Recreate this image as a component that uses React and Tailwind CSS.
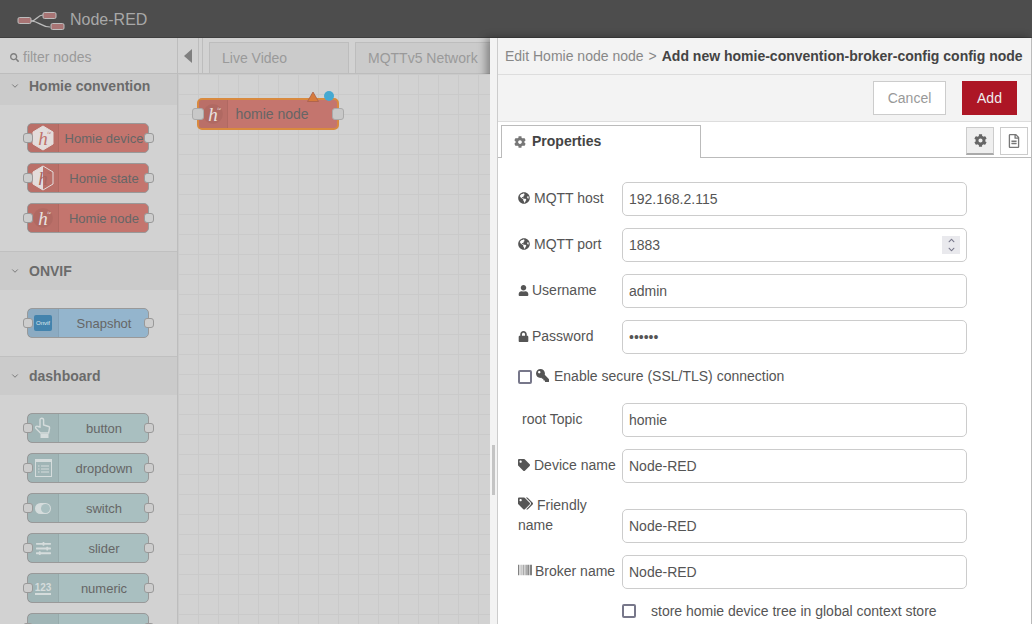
import React from 'react';
import {
  FaSearch, FaCog, FaGlobeAmericas, FaUser, FaLock, FaKey, FaTag, FaTags, FaBarcode,
  FaRegFileAlt, FaChevronUp, FaChevronDown, FaSlidersH,
} from 'react-icons/fa';
import { LuChevronDown } from 'react-icons/lu';

const Logo = () => (
  <svg className="mt-[3px]" width="48" height="24" viewBox="0 0 48 24" fill="none">
    <path d="M14 13 C20 13 20 7 26 7" stroke="#bdbdbd" strokeWidth="1.2" />
    <path d="M14 13 C22 13 24 19 33 19" stroke="#bdbdbd" strokeWidth="1.2" />
    <rect x="1" y="9.5" width="13" height="6" rx="1.5" fill="#a87474" stroke="#bdbdbd" />
    <rect x="26" y="4.5" width="13" height="6" rx="1.5" fill="#a87474" stroke="#bdbdbd" />
    <rect x="34" y="15.5" width="13" height="6" rx="1.5" fill="#a87474" stroke="#bdbdbd" />
  </svg>
);

const Hexagon = ({ solid }) => (
  <svg width="22" height="26" viewBox="0 0 22 26">
    <path
      d="M11 1 L21 7 L21 19 L11 25 L1 19 L1 7 Z"
      fill={solid ? '#e3dcdb' : 'none'}
      stroke="#e3dcdb"
      strokeWidth="1"
    />
    {!solid && <path d="M11 1 L1 7 L1 19 L11 25 Z" fill="#e3dcdb" />}
  </svg>
);

const HIcon = ({ variant }) => (
  <div className="relative flex h-full w-full items-center justify-center">
    {variant === 'device' && <Hexagon solid />}
    {variant === 'state' && <Hexagon />}
    {!variant && <div className="absolute h-[20px] w-[20px] rounded-full bg-black/5" />}
    <span
      className={`absolute font-['Liberation_Serif',serif] text-[19px] italic leading-none ${
        variant === 'device' ? 'text-[#c0726b]' : variant === 'state' ? 'text-[#a8655f]' : 'text-[#e8e2e1]'
      }`}
    >
      h
      <span className="absolute left-[9px] top-[1px] text-[5px] leading-none">ie</span>
    </span>
  </div>
);

const HandIcon = () => (
  <svg width="18" height="22" viewBox="0 0 18 22" fill="none" stroke="#d5dcdc" strokeWidth="1.4">
    <path d="M6 10 V3 a1.8 1.8 0 0 1 3.6 0 V8 l5 1.5 a1.5 1.5 0 0 1 1 1.5 l-1 5 H6.5 L2 11.5 a1.4 1.4 0 0 1 2-2 Z" />
    <rect x="6.5" y="17" width="8" height="4" fill="#d5dcdc" stroke="none" />
  </svg>
);

const DropdownIcon = () => (
  <svg width="17" height="18" viewBox="0 0 17 18" fill="none" stroke="#d5dcdc">
    <rect x="0.5" y="0.5" width="16" height="17" />
    <rect x="0.5" y="0.5" width="16" height="2" fill="#d5dcdc" />
    <path d="M3 7 H4.5 M6 7 H14 M3 10 H4.5 M6 10 H14 M3 13 H4.5 M6 13 H14" />
  </svg>
);

const SwitchIcon = () => (
  <div className="flex h-[11px] w-4 items-center justify-end rounded-full bg-[#d5dcdc] pr-[1px]">
    <div className="h-[9px] w-[9px] rounded-full bg-[#a9bfc0]" />
  </div>
);

const Port = () => <div className="h-[10px] w-[10px] shrink-0 rounded-[3px] border border-[#999] bg-[#cdcdcd]" />;

const PaletteNode = ({ label, color, icon }) => (
  <div className="relative ml-[27px] flex h-[30px] w-[122px] rounded-[5px] border border-[#999] text-[13px] text-[#666]" style={{ backgroundColor: color }}>
    <div className="flex w-[31px] shrink-0 items-center justify-center border-r border-black/5 bg-black/5">{icon}</div>
    <div className="flex flex-1 items-center justify-center whitespace-nowrap pl-[1px] pt-[1px]">{label}</div>
    <div className="absolute left-[-5px] top-[9px]"><Port /></div>
    <div className="absolute right-[-6px] top-[9px]"><Port /></div>
  </div>
);

const Section = ({ title, headerClass, children }) => (
  <div className="border-b border-[#c0c0c0]">
    <div className={`flex items-center bg-[#cbcbcb] pl-[10px] text-[14px] font-bold text-[#6b6b6b] ${headerClass}`}>
      <LuChevronDown className="mr-[9px] text-[#6b6b6b]" size={10} />
      {title}
    </div>
    <div className="flex flex-col gap-[10px] py-[18px]">{children}</div>
  </div>
);

const RED = '#c4756e';
const TEAL = '#a9bfc0';

const Palette = () => (
  <div className="flex w-[178px] shrink-0 flex-col overflow-hidden border-r border-[#bdbdbd] bg-[#d2d2d2]">
    <div className="flex h-[36px] shrink-0 items-center border-b border-[#bdbdbd] pl-[10px] pt-[4px] text-[14px] text-[#9a9a9a]">
      <FaSearch size={9} className="mr-[4px] text-[#7f7f7f]" />
      filter nodes
    </div>
    <Section title="Homie convention" headerClass="h-[31px] pb-[7px]">
      <PaletteNode label="Homie device" color={RED} icon={<HIcon variant="device" />} />
      <PaletteNode label="Homie state" color={RED} icon={<HIcon variant="state" />} />
      <PaletteNode label="Homie node" color={RED} icon={<HIcon />} />
    </Section>
    <Section title="ONVIF" headerClass="h-[38px]">
      <PaletteNode
        label="Snapshot"
        color="#94b5cd"
        icon={
          <div className="flex h-[16px] w-[18px] items-center justify-center rounded-[2px] bg-[#4383ad] text-[6px] text-[#dfe8ee]">
            Onvif
          </div>
        }
      />
    </Section>
    <Section title="dashboard" headerClass="h-[38px]">
      <PaletteNode label="button" color={TEAL} icon={<HandIcon />} />
      <PaletteNode label="dropdown" color={TEAL} icon={<DropdownIcon />} />
      <PaletteNode label="switch" color={TEAL} icon={<SwitchIcon />} />
      <PaletteNode label="slider" color={TEAL} icon={<FaSlidersH size={15} className="text-[#d5dcdc]" />} />
      <PaletteNode
        label="numeric"
        color={TEAL}
        icon={<span className="border-b-2 border-[#d5dcdc] text-[10px] font-bold leading-[11px] text-[#d5dcdc]">123</span>}
      />
      <PaletteNode label="" color={TEAL} icon={null} />
    </Section>
  </div>
);

const Workspace = () => (
  <div className="flex min-w-0 flex-1 flex-col overflow-hidden">
    <div className="flex h-[36px] shrink-0 border-b border-[#bdbdbd] bg-[#d2d2d2] text-[14px] text-[#9a9a9a]">
      <div className="flex w-[21px] shrink-0 items-center justify-center border-r border-[#bdbdbd] pr-[1px]">
        <svg width="8" height="14" viewBox="0 0 8 14"><path d="M8 0 V14 L0 7 Z" fill="#7f7f7f" /></svg>
      </div>
      <div className="ml-[3px] w-[1px] shrink-0 bg-[#bdbdbd]" />
      <div className="ml-[6px] mt-[4px] flex w-[140px] shrink-0 items-center border border-b-0 border-[#bdbdbd] bg-[#cbcbcb] pl-[12px]">Live Video</div>
      <div className="ml-[6px] mt-[4px] flex w-[160px] shrink-0 items-center whitespace-nowrap border border-b-0 border-[#bdbdbd] bg-[#cbcbcb] pl-[12px]">MQTTv5 Network</div>
    </div>
    <div className="relative flex-1 bg-[#d2d2d2] bg-[linear-gradient(#cacaca_1px,transparent_1px),linear-gradient(90deg,#cacaca_1px,transparent_1px)] bg-[size:20px_20px] bg-[position:0_0]">
      <div className="absolute left-[19px] top-[24px] flex h-[32px] w-[142px] rounded-[5px] border-2 border-[#d98a3f] bg-[#c4756e] text-[14px] text-[#666]">
        <div className="flex w-[29px] shrink-0 items-center justify-center border-r border-black/5 bg-black/5"><HIcon /></div>
        <div className="flex flex-1 items-center justify-center pr-[21px]">homie node</div>
        <div className="absolute left-[-7px] top-[8px] h-3 w-3 rounded-[3px] border border-[#aaa] bg-[#c8c8c8]" />
        <div className="absolute right-[-7px] top-[8px] h-3 w-3 rounded-[3px] border border-[#aaa] bg-[#c8c8c8]" />
        <svg className="absolute left-[108px] top-[-9px]" width="12" height="11" viewBox="0 0 12 11">
          <path d="M6 1 L11.5 10.5 H0.5 Z" fill="#d77b3c" stroke="#a8604a" strokeWidth="0.8" />
        </svg>
        <div className="absolute left-[125px] top-[-9px] h-[10px] w-[10px] rounded-full bg-[#45a9d1]" />
      </div>
    </div>
  </div>
);

const Field = ({ icon, label, value, number }) => (
  <div className="mb-3 flex items-start">
    <label className="w-[124px] shrink-0 whitespace-nowrap pl-[20px] pt-[6px] text-[14px] leading-[20px] text-[#555]">
      {icon}
      {label}
    </label>
    <div className="relative flex h-[34px] w-[345px] items-center rounded-[5px] border border-[#ccc] bg-white pl-[6px] text-[14px] text-[#555]">
      {value}
      {number && (
        <div className="absolute right-[6px] top-[7px] flex h-[18px] w-[18px] flex-col items-center justify-center gap-[2px] bg-[#e9e9ed] text-[#77778a]">
          <FaChevronUp size={7} />
          <FaChevronDown size={7} />
        </div>
      )}
    </div>
  </div>
);

const LabelIcon = ({ as: Icon, size = 12, gap = 'mr-[4px]' }) => (
  <Icon size={size} className={`inline-block align-[-1px] text-[#555] ${gap}`} />
);

const Check = () => <div className="h-[14px] w-[14px] shrink-0 rounded-[2px] border-2 border-[#77778a] bg-white" />;

const Tray = () => (
  <div className="flex w-[542px] shrink-0 overflow-hidden shadow-[-4px_0_8px_rgba(0,0,0,0.35)]">
    <div className="w-2 shrink-0 border-r border-[#ccc] bg-[#f3f3f3] pl-[2px] pt-[407px]">
      <div className="h-[50px] w-[3px] bg-[#c4c4c4]" />
    </div>
    <div className="flex min-w-0 flex-1 flex-col border-r border-[#bbb] bg-white">
      <div className="flex h-[37px] shrink-0 items-center whitespace-nowrap border-b border-[#ddd] bg-[#f3f3f3] pl-[7px] text-[14px] text-[#888]">
        Edit Homie node node
        <span className="ml-[5px] mr-[5px]">&gt;</span>
        <b className="text-[#444]">Add new homie-convention-broker-config config node</b>
      </div>
      <div className="flex h-[47px] shrink-0 items-center justify-end gap-[16px] border-b border-[#ddd] bg-[#f3f3f3] pr-[14px] text-[14px]">
        <div className="flex h-[34px] w-[73px] items-center justify-center border border-[#ccc] bg-white text-[#999]">Cancel</div>
        <div className="flex h-[34px] w-[55px] items-center justify-center bg-[#ad1625] text-[#eee]">Add</div>
      </div>
      <div className="flex h-[36px] shrink-0 items-end justify-between border-b border-[#bbb] pl-[3px] pr-[3px]">
        <div className="mb-[-1px] flex h-[33px] w-[200px] items-center border border-b-0 border-[#bbb] bg-white pb-[1px] pl-[12px] text-[14px] font-bold text-[#444]">
          <FaCog size={12} className="mr-[6px] text-[#777]" />
          Properties
        </div>
        <div className="mb-[2px] flex gap-[6px]">
          <div className="flex h-[28px] w-[28px] items-center justify-center border border-b-[2px] border-[#ccc] border-b-[#aaa] bg-[#efefef]">
            <FaCog size={13} className="text-[#666]" />
          </div>
          <div className="flex h-[28px] w-[28px] items-center justify-center border border-[#ccc] bg-white">
            <FaRegFileAlt size={14} className="text-[#777]" />
          </div>
        </div>
      </div>
      <div className="flex-1 overflow-hidden pt-6">
        <Field icon={<LabelIcon as={FaGlobeAmericas} />} label="MQTT host" value="192.168.2.115" />
        <Field icon={<LabelIcon as={FaGlobeAmericas} />} label="MQTT port" value="1883" number />
        <Field icon={<LabelIcon as={FaUser} size={11} gap="mr-[3px]" />} label="Username" value="admin" />
        <Field icon={<LabelIcon as={FaLock} size={11} gap="mr-[3px]" />} label="Password" value="••••••" />
        <div className="mb-3 flex h-[25px] items-start pl-[20px] text-[14px] leading-[20px] text-[#555]">
          <div className="mt-[4px]"><Check /></div>
          <FaKey size={13} className="ml-[4px] mr-[5px] mt-[3px] -scale-x-100 text-[#555]" />
          Enable secure (SSL/TLS) connection
        </div>
        <Field label={<span className="pl-[4px]">root Topic</span>} value="homie" />
        <Field icon={<LabelIcon as={FaTag} />} label="Device name" value="Node-RED" />
        <div className="mb-3 flex items-start">
          <label className="w-[124px] shrink-0 pl-[20px] pr-[20px] text-[14px] leading-[20px] text-[#555]">
            <LabelIcon as={FaTags} size={15} />
            Friendly name
          </label>
          <div className="mt-[14px] flex h-[34px] w-[345px] items-center rounded-[5px] border border-[#ccc] bg-white pl-[6px] text-[14px] text-[#555]">Node-RED</div>
        </div>
        <Field icon={<LabelIcon as={FaBarcode} size={14} gap="mr-[3px]" />} label="Broker name" value="Node-RED" />
        <div className="mt-[4px] flex items-center pl-[124px] text-[14px] leading-[20px] text-[#555]">
          <Check />
          <span className="ml-[15px]">store homie device tree in global context store</span>
        </div>
      </div>
    </div>
  </div>
);

export default function App() {
  return (
    <div className="flex h-[624px] w-[1032px] flex-col overflow-hidden bg-white font-['Liberation_Sans',Arial,sans-serif]">
      <div className="flex h-[38px] shrink-0 items-center border-b border-[#3f3f3f] bg-[#4d4d4d] pl-[17px] text-[16px] text-[#a8a8a8]">
        <Logo />
        <span className="ml-[5px] mt-[3px]">Node-RED</span>
      </div>
      <div className="flex min-h-0 flex-1">
        <Palette />
        <Workspace />
        <Tray />
      </div>
    </div>
  );
}
